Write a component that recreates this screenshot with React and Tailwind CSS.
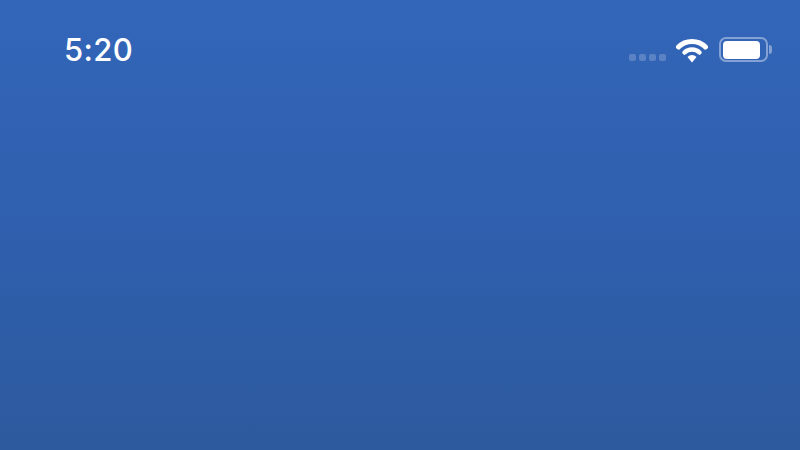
export default function App() {
  return (
    <main className="w-[800px] h-[450px] overflow-hidden bg-gradient-to-b from-[#3366b9] via-[#2f5fae] to-[#2d5a9e] font-['Inter',sans-serif] text-white">
      <header className="flex items-center justify-between pl-[64px] pr-[28px] pt-[32px]">
        <span className="text-[31px] leading-[35px] font-[550] tracking-[0.4px]">5:20</span>

        <div className="flex items-center">
          <div className="flex gap-[3px] mt-[15px] mr-[9px]">
            <span className="w-[7px] h-[7px] rounded-[2px] bg-white/20" />
            <span className="w-[7px] h-[7px] rounded-[2px] bg-white/20" />
            <span className="w-[7px] h-[7px] rounded-[2px] bg-white/20" />
            <span className="w-[7px] h-[7px] rounded-[2px] bg-white/20" />
          </div>

          {/* wifi */}
          <svg width="34" height="26" viewBox="0 0 34 26" fill="none" className="mr-[10px]">
            <path d="M3.5 10C10.5 2.5 23.5 2.5 30.5 10" stroke="white" strokeWidth="5" strokeLinecap="round" />
            <path d="M9.5 15.5C13.5 11.5 20.5 11.5 24.5 15.5" stroke="white" strokeWidth="4.5" strokeLinecap="round" />
            <path d="M12.5 20C15 17.2 19 17.2 21.5 20L17 25.5Z" fill="white" />
          </svg>

          {/* battery */}
          <div className="flex items-center">
            <div className="w-[49px] h-[25px] rounded-[7px] border-2 border-white/40 p-[1.5px]">
              <div className="w-[37px] h-[18px] rounded-[4px] bg-white" />
            </div>
            <div className="w-[3px] h-[9px] ml-[1px] rounded-r-full bg-white/40" />
          </div>
        </div>
      </header>
    </main>
  );
}
